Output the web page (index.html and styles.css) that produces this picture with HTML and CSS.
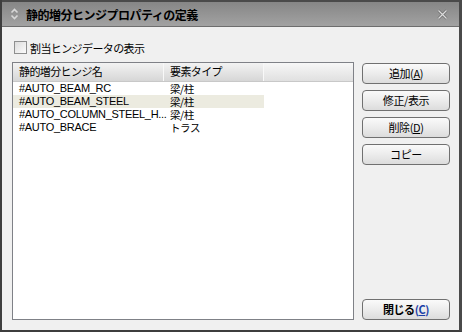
FILE: index.html
```html
<!DOCTYPE html>
<html lang="ja">
<head>
<meta charset="utf-8">
<title>静的増分ヒンジプロパティの定義</title>
<link rel="stylesheet" href="styles.css">
</head>
<body>
<div class="window">
  <div class="titlebar">
    <svg class="t-icon" width="9" height="12" viewBox="0 0 9 12">
      <path d="M1.5 4.5 L4.5 1.5 L7.5 4.5" fill="none" stroke="#d8d8d8" stroke-width="1.6"/>
      <path d="M1.5 7.5 L4.5 10.5 L7.5 7.5" fill="none" stroke="#d8d8d8" stroke-width="1.6"/>
    </svg>
    <span class="title">静的増分ヒンジプロパティの定義</span>
    <svg class="t-close" width="11" height="11" viewBox="0 0 11 11">
      <path d="M1.5 1.5 L9.5 9.5 M9.5 1.5 L1.5 9.5" fill="none" stroke="#6a6a6a" stroke-width="2.6"/>
      <path d="M1.5 1.5 L9.5 9.5 M9.5 1.5 L1.5 9.5" fill="none" stroke="#dcdcdc" stroke-width="1.3"/>
    </svg>
  </div>
  <div class="content">
    <div class="main">
      <label class="check"><span class="box"></span><span class="check-label">割当ヒンジデータの表示</span></label>
      <div class="listbox">
        <div class="header">
          <div class="hcell col1">静的増分ヒンジ名</div>
          <div class="hcell col2">要素タイプ</div>
          <div class="hcell fill"></div>
        </div>
        <div class="row"><div class="cell col1">#AUTO_BEAM_RC</div><div class="cell col2">梁/柱</div></div>
        <div class="row selected"><div class="cell col1">#AUTO_BEAM_STEEL</div><div class="cell col2">梁/柱</div></div>
        <div class="row"><div class="cell col1">#AUTO_COLUMN_STEEL_H...</div><div class="cell col2">梁/柱</div></div>
        <div class="row"><div class="cell col1">#AUTO_BRACE</div><div class="cell col2">トラス</div></div>
      </div>
    </div>
    <div class="side">
      <button class="btn">追加(<u>A</u>)</button>
      <button class="btn">修正/表示</button>
      <button class="btn">削除(<u>D</u>)</button>
      <button class="btn">コピー</button>
      <button class="btn close">閉じる<span class="acc">(<u>C</u>)</span></button>
    </div>
  </div>
</div>
</body>
</html>
```
FILE: styles.css
```css
html, body {
  margin: 0;
  padding: 0;
  background: #f0f0f0;
}
body {
  font-family: "Liberation Sans", "Noto Sans CJK JP", sans-serif;
  font-size: 11px;
  color: #000;
}
.window {
  width: 462px;
  height: 332px;
  box-sizing: border-box;
  background: #f0f0f0;
  border-left: 2px solid #3e3e3e;
  border-right: 3px solid #4a4a4a;
  border-bottom: 2px solid #3e3e3e;
  display: flex;
  flex-direction: column;
}
.titlebar {
  height: 27px;
  box-sizing: border-box;
  border-top: 2px solid #4a4a4a;
  border-bottom: 1px solid #6e6e6e;
  background: linear-gradient(#868686, #a2a2a2);
  display: flex;
  align-items: center;
  padding: 0 10px 0 8px;
}
.t-icon {
  flex: none;
}
.title {
  margin-left: 7px;
  font-family: "Noto Sans CJK JP", sans-serif;
  font-weight: bold;
  font-size: 12px;
  letter-spacing: -0.5px;
  color: #000;
  flex: 1;
}
.t-close {
  flex: none;
  margin-right: 1px;
}
.content {
  flex: 1;
  display: flex;
  gap: 8px;
  padding: 12px 9px 10px 10px;
  box-sizing: border-box;
  min-height: 0;
}
.main {
  width: 343px;
  display: flex;
  flex-direction: column;
}
.check {
  height: 17px;
  margin-bottom: 6px;
  display: flex;
  align-items: center;
  padding-left: 2px;
}
.box {
  width: 11px;
  height: 11px;
  border: 1px solid #8e8f8f;
  background: linear-gradient(135deg, #dcdcdc, #fbfbfb);
  margin-right: 3px;
}
.check-label {
  font-family: "Noto Sans CJK JP", sans-serif;
  font-size: 11px;
  letter-spacing: -0.6px;
}
.listbox {
  flex: 1;
  border: 1px solid #7f8187;
  background: #fff;
}
.header {
  height: 18px;
  display: flex;
  border-bottom: 1px solid #c8c8c8;
}
.hcell {
  height: 18px;
  box-sizing: border-box;
  line-height: 17px;
  padding-left: 6px;
  font-family: "Noto Sans CJK JP", sans-serif;
  font-size: 11px;
  letter-spacing: -0.6px;
  background: linear-gradient(#f3f3f3, #d6d6d6);
  border-right: 1px solid #f8f8f8;
}
.hcell.fill {
  flex: 1;
  border-right: none;
  background: linear-gradient(#f7f7f7, #e0e0e0);
}
.col1 {
  width: 151px;
  flex: none;
}
.col2 {
  width: 100px;
  flex: none;
}
.row {
  height: 13px;
  display: flex;
}
.cell {
  box-sizing: border-box;
  height: 13px;
  padding-left: 6px;
  line-height: 13px;
  white-space: nowrap;
  letter-spacing: -0.3px;
}
.cell.col2 {
  font-family: "Noto Sans CJK JP", sans-serif;
  font-size: 10.5px;
  letter-spacing: -0.4px;
}
.row.selected .cell {
  background: #ecebe0;
}
.side {
  width: 88px;
  display: flex;
  flex-direction: column;
  gap: 6px;
  padding-top: 24px;
}
.btn {
  height: 21px;
  width: 88px;
  border: 1px solid #707070;
  border-radius: 4px;
  background: linear-gradient(#fafafa, #ececec 50%, #dcdcdc);
  font-family: "Noto Sans CJK JP", sans-serif;
  font-size: 11px;
  letter-spacing: -0.4px;
  padding: 0;
  color: #000;
  line-height: 19px;
}
.btn.close {
  margin-top: auto;
  font-weight: bold;
}
.acc {
  color: #1b3fa8;
}
```
